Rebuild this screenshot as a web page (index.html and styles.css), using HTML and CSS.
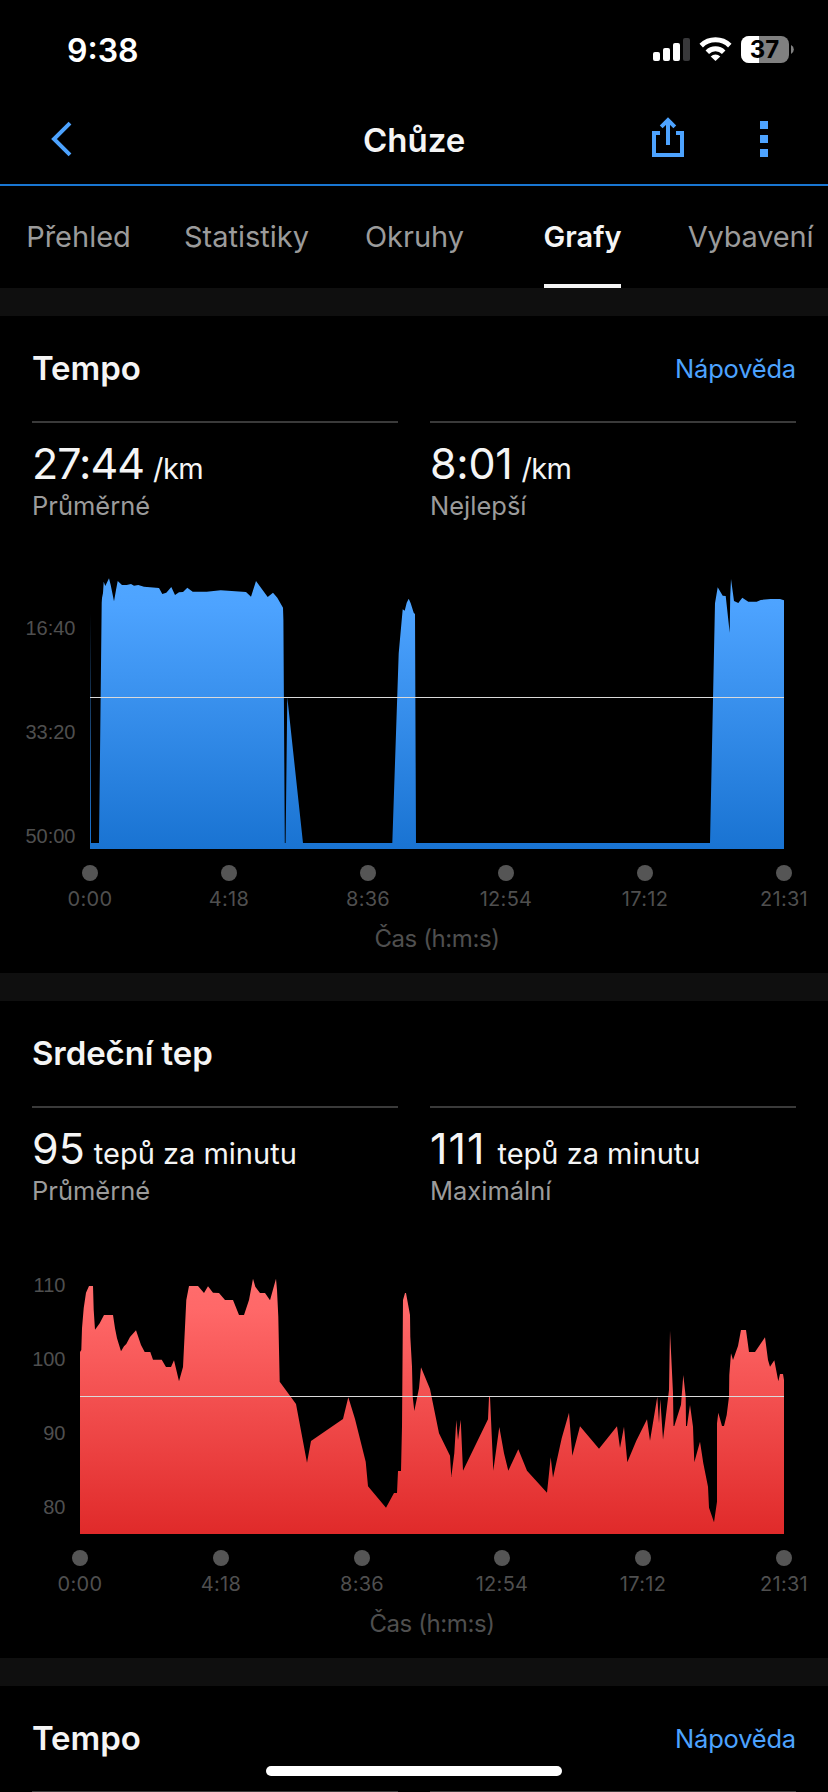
FILE: index.html
```html
<!DOCTYPE html>
<html lang="cs">
<head>
    <meta charset="UTF-8">
    <meta name="viewport" content="width=device-width, initial-scale=1.0">
    <title>Chůze</title>
    <link rel="stylesheet" href="styles.css">
</head>
<body>
    <div class="status-bar">
        <span class="time">9:38</span>
        <svg class="status-icons" width="144" height="30" viewBox="652 35 144 30">
            <!-- signal -->
            <rect x="653" y="52" width="7" height="9" rx="2" fill="#fff"/>
            <rect x="663" y="48" width="7" height="13" rx="2" fill="#fff"/>
            <rect x="673" y="43" width="7" height="18" rx="2" fill="#fff"/>
            <rect x="683" y="38" width="7" height="23" rx="2" fill="#38383a"/>
            <!-- wifi -->
            <g fill="none" stroke="#fff" stroke-width="5">
                <path d="M701.2 45.6a20.6 20.6 0 0 1 28.6 0"/>
                <path d="M707.3 52.2a11.7 11.7 0 0 1 16.4 0"/>
            </g>
            <path d="M710.7 56.4a7 7 0 0 1 9.6 0L715.5 61z" fill="#fff"/>
            <!-- battery -->
            <rect x="741" y="36" width="48" height="27" rx="8" fill="#808080"/>
            <path d="M749 36h10v27h-10a8 8 0 0 1-8-8V44a8 8 0 0 1 8-8z" fill="#fff"/>
            <path d="M791 45a5 5 0 0 1 0 9z" fill="#808080"/>
            <text class="battery-level" x="764.5" y="58.3">37</text>
        </svg>
    </div>

    <header>
        <svg class="back" width="24" height="40" viewBox="50 120 24 40">
            <path d="M70 124.2L54 140l16 15.8" fill="none" stroke="#4da3ff" stroke-width="4"/>
        </svg>
        <h1>Chůze</h1>
        <svg class="share" width="32" height="40" viewBox="652 118 32 40">
            <path d="M660 134h-6v22h28v-22h-6M668 146v-24M661.2 127.8l6.8-6.8 6.8 6.8" fill="none" stroke="#4da3ff" stroke-width="4"/>
        </svg>
        <svg class="more" width="8" height="36" viewBox="0 0 8 36" fill="#4da3ff">
            <rect width="8" height="8"/>
            <rect y="14" width="8" height="8"/>
            <rect y="28" width="8" height="8"/>
        </svg>
    </header>

    <nav>
        <a>Přehled</a>
        <a>Statistiky</a>
        <a>Okruhy</a>
        <a class="active"><span>Grafy</span></a>
        <a>Vybavení</a>
    </nav>

    <main>
        <section>
            <div class="section-head">
                <h2>Tempo</h2>
                <a class="help">Nápověda</a>
            </div>
            <div class="stats">
                <div class="stat">
                    <p class="value time-value">27:44<small>/km</small></p>
                    <p class="label">Průměrné</p>
                </div>
                <div class="stat">
                    <p class="value best">8:01<small>/km</small></p>
                    <p class="label">Nejlepší</p>
                </div>
            </div>
            <svg class="chart" width="828" height="413" viewBox="0 0 828 413">
                <defs>
                    <linearGradient id="blue" gradientUnits="userSpaceOnUse" x1="0" y1="18" x2="0" y2="289">
                        <stop offset="0" stop-color="#50a6ff"/>
                        <stop offset="0.1" stop-color="#4da3ff"/>
                        <stop offset="1" stop-color="#1973d2"/>
                    </linearGradient>
                </defs>
                <polygon fill="url(#blue)" points="90,289 90,53 91,283 99,283 101.7,43 102,38 103,33 103.7,21.7 105.3,26 109,18.3 110.7,25 114,41.3 116,30 117.7,21 122,25 126.7,25 131,24 134,25.7 138.3,25 144,26.7 159,28 162.3,34 166.3,32.7 171.3,27 175,35 179,32.3 183,32 187.3,27.7 192.7,31.7 206.7,31.7 220.7,30.3 246,32 251,36.7 256,21 267.7,37 273,32.7 277.3,37.7 283,47.7 283.4,60 284.8,283 285.6,283 287.3,137.3 303,283 392.3,283 398.7,93.3 402.7,49.3 404.7,50.7 406.7,42.7 408.7,38.7 410.7,43.3 413.7,52.7 415,54 416,283 710,283 715,43.3 717.7,27.3 722.7,35.7 725.7,36 729.7,72.7 730.2,37 731,19 734,41 738.3,43 742.3,37.7 748.3,41.7 756.7,41.7 760.7,40 770.7,39 780,39 784,40.3 784,289"/>
                <rect class="average" x="90" y="137" width="694" height="1"/>
                <g class="y-labels">
                    <text x="75.5" y="75">16:40</text>
                    <text x="75.5" y="179">33:20</text>
                    <text x="75.5" y="283">50:00</text>
                </g>
                <g class="dots">
                    <circle cx="90" cy="313" r="8"/>
                    <circle cx="229" cy="313" r="8"/>
                    <circle cx="368" cy="313" r="8"/>
                    <circle cx="506" cy="313" r="8"/>
                    <circle cx="645" cy="313" r="8"/>
                    <circle cx="784" cy="313" r="8"/>
                </g>
                <g class="x-labels">
                    <text x="90" y="346">0:00</text>
                    <text x="229" y="346">4:18</text>
                    <text x="368" y="346">8:36</text>
                    <text x="506" y="346">12:54</text>
                    <text x="645" y="346">17:12</text>
                    <text x="784" y="346">21:31</text>
                </g>
                <text class="axis-title" x="437" y="387">Čas (h:m:s)</text>
            </svg>
        </section>

        <section>
            <div class="section-head">
                <h2>Srdeční tep</h2>
            </div>
            <div class="stats">
                <div class="stat">
                    <p class="value">95<small>tepů za minutu</small></p>
                    <p class="label">Průměrné</p>
                </div>
                <div class="stat">
                    <p class="value max">111<small>tepů za minutu</small></p>
                    <p class="label">Maximální</p>
                </div>
            </div>
            <svg class="chart" width="828" height="413" viewBox="0 0 828 413">
                <defs>
                    <linearGradient id="red" gradientUnits="userSpaceOnUse" x1="0" y1="34" x2="0" y2="289">
                        <stop offset="0" stop-color="#ff6d6d"/>
                        <stop offset="0.12" stop-color="#ff6868"/>
                        <stop offset="1" stop-color="#e02a2a"/>
                    </linearGradient>
                </defs>
                <polygon fill="url(#red)" points="80,289 80,107 81.3,105 82,83.3 83.7,63.3 86,47.7 89,41 93,41 93.7,65 95,84.7 99.7,78.3 104,70 113,70 115,83.3 117,93.3 121,106.3 124,101.3 126.3,99 130,92 136,85.3 141,100 144.7,107 150.3,107 153,114.7 161.7,114.7 166,122 171,122 174,115.3 179,136.3 183,122 185,81.7 186.3,55 189,41 198,41 204,48 208,41.3 213,47.7 219,48 225,55 233,55 239,70 244,70 249,55 253,33.7 255.3,41.7 260,48 265,48 270,55.3 276,33.7 277,45 278.3,71.7 279.7,136.7 296,159 307,217.7 311,196 343,174 348.3,152.3 355,174 365.7,216.7 368,241.3 386,262.7 394,248 397,248 398,226 401,226 402,181.7 403,55 405,48 406,48 410,70 410.3,91.7 412,121.7 412.7,151.7 414.3,166 419,143.3 421,122.3 430,144 439,188.3 450,210.7 451.3,232 454.3,208.3 456.3,175 458,195.3 460.7,174.7 463,225.7 488,174.3 489,152.3 490,151.7 493.3,225.7 499.3,182 504,208.3 508.3,225.7 518.3,204.3 527,225.7 547,247.7 550.7,212.3 553,232.7 561.7,193.3 569,167.7 572.3,210.7 580,181.3 599,203.7 617,181.3 620,203 624,181.7 627.3,217.3 636.3,195.7 647,174.3 650,195.7 657.3,151.7 659,178.3 660.3,154.3 663,194.7 669,145 670,85.7 673,148.3 673.5,181 674.3,181 681,159.7 683.3,130 685.7,151.7 686,181 687,181 690,160 693,181.7 694.3,217.3 700,196.7 703.3,218.3 708,241.7 709,262.7 714,277.3 717,256.7 717,178.3 718.3,167.7 722,181 724,181 726.7,170 729,151.7 729.3,130 731,108.3 733,115 738,101 741,85 746,85 749,107 755,107 765,92.3 768,115 770,121.7 774.3,115.3 778.3,136.3 780,129 783,129 784,135 784,289"/>
                <rect class="average" x="80" y="151" width="704" height="1"/>
                <g class="y-labels">
                    <text x="65.5" y="47">110</text>
                    <text x="65.5" y="121">100</text>
                    <text x="65.5" y="195">90</text>
                    <text x="65.5" y="269">80</text>
                </g>
                <g class="dots">
                    <circle cx="80" cy="313" r="8"/>
                    <circle cx="221" cy="313" r="8"/>
                    <circle cx="362" cy="313" r="8"/>
                    <circle cx="502" cy="313" r="8"/>
                    <circle cx="643" cy="313" r="8"/>
                    <circle cx="784" cy="313" r="8"/>
                </g>
                <g class="x-labels">
                    <text x="80" y="346">0:00</text>
                    <text x="221" y="346">4:18</text>
                    <text x="362" y="346">8:36</text>
                    <text x="502" y="346">12:54</text>
                    <text x="643" y="346">17:12</text>
                    <text x="784" y="346">21:31</text>
                </g>
                <text class="axis-title" x="432" y="387">Čas (h:m:s)</text>
            </svg>
        </section>

        <section class="cut">
            <div class="section-head">
                <h2>Tempo</h2>
                <a class="help">Nápověda</a>
            </div>
            <div class="stats">
                <div class="stat"></div>
                <div class="stat"></div>
            </div>
        </section>
    </main>

    <div class="home-indicator"></div>
</body>
</html>
```
FILE: styles.css
```css
* {
    box-sizing: border-box;
}
body {
    margin: 0;
    height: 1792px;
    overflow: hidden;
    background-color: #000;
    color: #f5f5f5;
    font-family: Inter, "Liberation Sans", sans-serif;
}
svg {
    display: block;
    flex: none;
}
.status-bar {
    display: flex;
    justify-content: space-between;
    height: 100px;
    padding: 35px 32px 0 67px;
}
.time {
    color: #fff;
    font-size: 32px;
    font-weight: 600;
    line-height: 31px;
}
.battery-level {
    font-size: 24px;
    font-weight: 700;
    text-anchor: middle;
}
header {
    display: flex;
    align-items: center;
    height: 86px;
    padding: 0 60px 6px 50px;
    border-bottom: 2px solid #1976d2;
}
h1 {
    flex: 1;
    margin: 0;
    padding: 1px 0 0 289px;
    font-size: 33px;
    font-weight: 600;
    line-height: 40px;
}
.share {
    margin-right: 76px;
    margin-top: -4px;
}
nav {
    display: flex;
    height: 102px;
    margin-left: -5.5px;
    width: 840px;
}
nav a {
    display: flex;
    justify-content: center;
    width: 168px;
    font-size: 29px;
    line-height: 102px;
    color: #9b9b9b;
}
nav a:last-child {
    letter-spacing: -0.2px;
}
nav .active {
    color: #f5f5f5;
    font-weight: 600;
}
nav .active span {
    border-bottom: 4px solid #f5f5f5;
}
section {
    height: 685px;
    border-top: 28px solid #0f0f0f;
}
section.cut {
    height: 134px;
    overflow: hidden;
}
.section-head {
    display: flex;
    justify-content: space-between;
    height: 105px;
    padding: 0 32px;
    line-height: 105px;
}
h2 {
    margin: 0;
    font-size: 33px;
    font-weight: 600;
    letter-spacing: -0.1px;
}
.help {
    color: #4da3ff;
    font-size: 25.5px;
    letter-spacing: -0.2px;
}
.stats {
    display: flex;
    gap: 32px;
    height: 139px;
    padding: 0 32px;
}
.stat {
    flex: 1;
    padding-top: 15px;
    border-top: 2px solid #3a3a3a;
}
.value {
    margin: 0;
    font-size: 43px;
    font-weight: 400;
    line-height: 50px;
    white-space: nowrap;
}
.time-value {
    letter-spacing: -1px;
}
.best {
    letter-spacing: -0.3px;
}
.max {
    letter-spacing: 1px;
}
.value small {
    margin-left: 9px;
    font-size: 29px;
    letter-spacing: 0;
}
.time-value small,
.best small {
    letter-spacing: -0.6px;
}
.max small {
    margin-left: 12px;
}
.label {
    margin: -5px 0 0;
    color: #9b9b9b;
    font-size: 25.5px;
    line-height: 34px;
}
.chart text {
    fill: #4f4f4f;
}
.average {
    fill: #dadada;
}
.dots {
    fill: #555;
}
.y-labels {
    font-family: "Liberation Sans", sans-serif;
    font-size: 20px;
    text-anchor: end;
}
.x-labels {
    font-size: 20px;
    letter-spacing: 0.3px;
    text-anchor: middle;
}
.axis-title {
    font-size: 24px;
    letter-spacing: -0.4px;
    text-anchor: middle;
}
.home-indicator {
    position: absolute;
    left: 266px;
    top: 1766px;
    width: 296px;
    height: 10px;
    border-radius: 5px;
    background-color: #fff;
}
```
